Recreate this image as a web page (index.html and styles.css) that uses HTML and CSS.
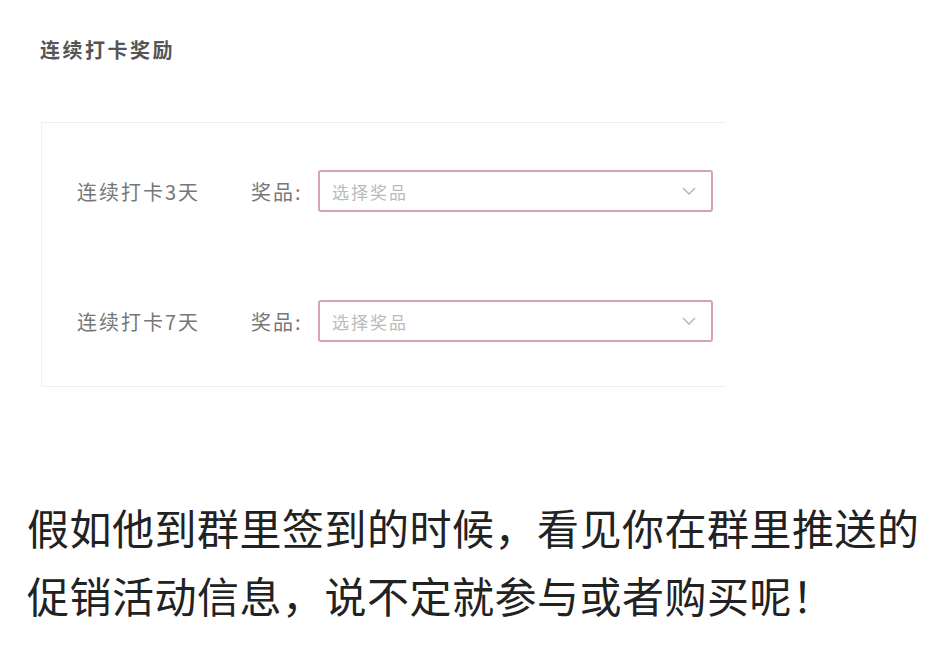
FILE: index.html
```html
<!DOCTYPE html>
<html lang="zh-CN">
<head>
    <meta charset="UTF-8">
    <meta name="viewport" content="width=device-width, initial-scale=1.0">
    <title>连续打卡奖励</title>
    <link rel="stylesheet" href="styles.css">
</head>
<body>
    <div class="panel">
        <div class="title">连续打卡奖励</div>

        <div class="card">
            <div class="row">
                <div class="label">连续打卡3天</div>
                <div class="field-name">奖品:</div>
                <div class="select">
                    <span class="placeholder">选择奖品</span>
                    <svg class="arrow" width="14" height="8" viewBox="0 0 14 8"><path d="M1 1 L7 7 L13 1" fill="none" stroke="#b8b8b8" stroke-width="1.5"/></svg>
                </div>
            </div>

            <div class="row">
                <div class="label">连续打卡7天</div>
                <div class="field-name">奖品:</div>
                <div class="select">
                    <span class="placeholder">选择奖品</span>
                    <svg class="arrow" width="14" height="8" viewBox="0 0 14 8"><path d="M1 1 L7 7 L13 1" fill="none" stroke="#b8b8b8" stroke-width="1.5"/></svg>
                </div>
            </div>
        </div>
    </div>

    <div class="text">
        假如他到群里签到的时候，看见你在群里推送的<br>
        促销活动信息，说不定就参与或者购买呢！
    </div>
</body>
</html>
```

FILE: styles.css
```css
body {
    margin: 0;
    padding: 0;
    background-color: #fff;
    font-family: "Noto Sans CJK SC", "Noto Sans", sans-serif;
}

.panel {
    padding: 40px 0 0 40px;
}

.title {
    font-size: 20px;
    line-height: 20px;
    font-weight: 600;
    letter-spacing: 2.5px;
    color: #555;
    margin-bottom: 62px;
}

.card {
    box-sizing: border-box;
    width: 685px;
    margin-left: 1px;
    border: 1px solid #efefef;
    border-right: none;
    padding: 47px 0 44px 35px;
    display: flex;
    flex-direction: column;
    gap: 88px;
}

.row {
    display: flex;
    align-items: center;
}

.label {
    width: 174px;
    font-size: 20px;
    letter-spacing: 2px;
    color: #777;
}

.field-name {
    width: 67px;
    font-size: 20px;
    letter-spacing: 2px;
    color: #777;
}

.select {
    width: 364px;
    height: 38px;
    border: 2px solid #d9a3ae;
    border-radius: 3px;
    display: flex;
    align-items: center;
    justify-content: space-between;
    padding: 0 15px 0 12px;
}

.placeholder {
    font-size: 17px;
    letter-spacing: 2px;
    color: #bbb;
}

.text {
    margin-top: 106px;
    padding-left: 27px;
    font-size: 42px;
    line-height: 68px;
    letter-spacing: 0.5px;
    color: #222;
}
```
